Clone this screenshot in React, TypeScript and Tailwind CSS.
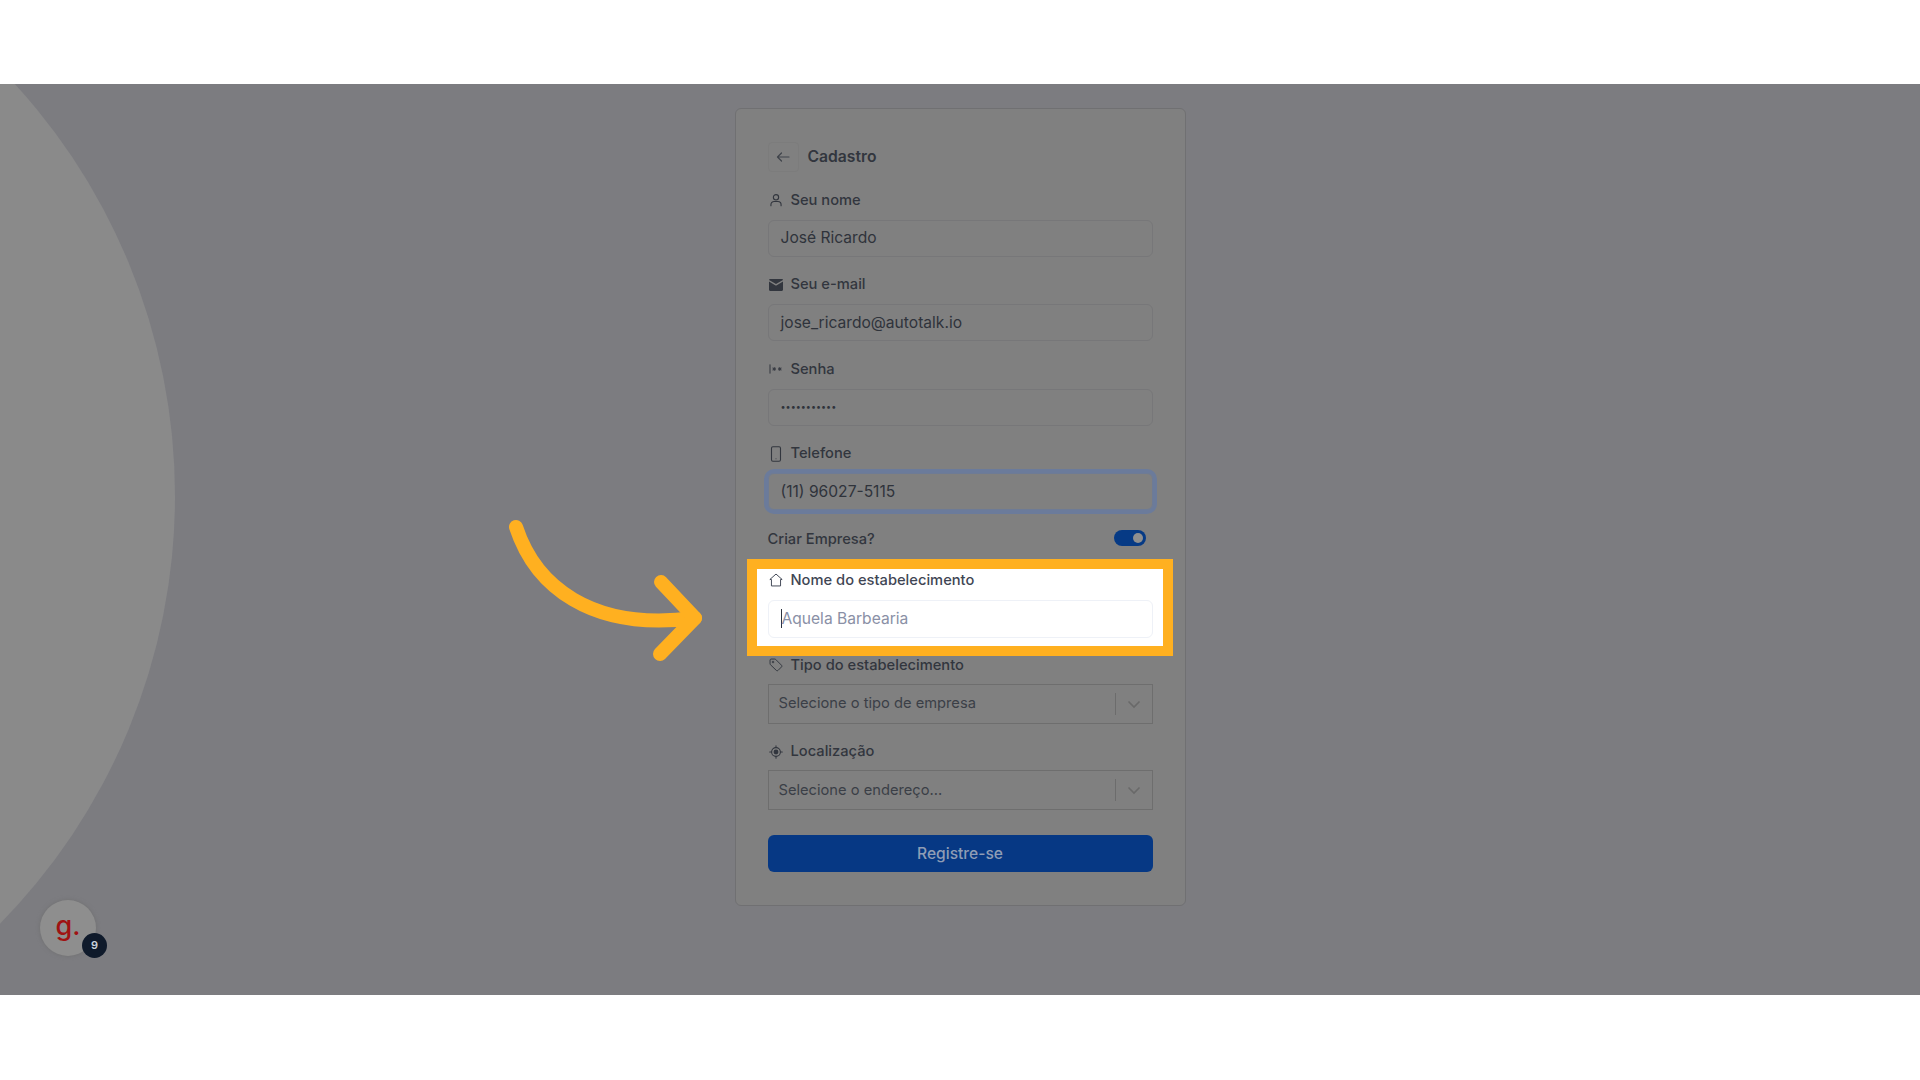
import { ReactNode } from "react";

const UserIcon = () => (
  <svg viewBox="0 0 16 16" className="w-[14px] h-[14px]" fill="none" stroke="currentColor" strokeWidth={1.3} strokeLinecap="round">
    <circle cx="8" cy="4.8" r="3" />
    <path d="M2.2 14.5v-1.2a3.6 3.6 0 0 1 3.6-3.6h4.4a3.6 3.6 0 0 1 3.6 3.6v1.2" />
  </svg>
);

const MailIcon = () => (
  <svg viewBox="0 0 14 12" className="w-[14px] h-[12px]" fill="currentColor">
    <path d="M1.2 0h11.6c.6 0 1.1.4 1.2 1L7 5 0 1c.1-.6.6-1 1.2-1z" />
    <path d="M0 2.6l6.6 3.8c.3.1.5.1.8 0L14 2.6v8.2c0 .7-.5 1.2-1.2 1.2H1.2C.5 12 0 11.5 0 10.8z" />
  </svg>
);

const PasswordIcon = () => (
  <svg viewBox="0 0 14 10" className="w-[14px] h-[10px]" fill="none" stroke="currentColor" strokeLinecap="round">
    <path d="M1 .8v8.4" strokeWidth={1} />
    <path d="M5.2 3.4v3.2M3.8 4.2l2.8 1.6M6.6 4.2L3.8 5.8M10.8 3.4v3.2M9.4 4.2l2.8 1.6M12.2 4.2L9.4 5.8" strokeWidth={0.9} />
  </svg>
);

const PhoneIcon = () => (
  <svg viewBox="0 0 12 16" className="w-[12px] h-[16px]" fill="none" stroke="currentColor" strokeWidth={1.1}>
    <rect x="1.5" y="0.8" width="9" height="14.4" rx="1.4" />
    <circle cx="6" cy="12.8" r="0.5" fill="currentColor" stroke="none" />
  </svg>
);

const HomeIcon = () => (
  <svg viewBox="0 0 16 16" className="w-[14px] h-[14px]" fill="none" stroke="currentColor" strokeWidth={1.1} strokeLinejoin="round">
    <path d="M1 7.4L8 1.2l7 6.2h-1.8v7.4H2.8V7.4z" />
  </svg>
);

const TagIcon = () => (
  <svg viewBox="0 0 16 16" className="w-[14px] h-[14px]" fill="none" stroke="currentColor" strokeWidth={1.1} strokeLinejoin="round">
    <path d="M1.2 2.4c0-.7.5-1.2 1.2-1.2h4.2c.4 0 .7.1 1 .4l6.8 6.8c.5.5.5 1.2 0 1.7l-4.2 4.2c-.5.5-1.2.5-1.7 0L1.6 7.6c-.3-.3-.4-.6-.4-1z" />
    <circle cx="4.6" cy="4.6" r="0.9" />
  </svg>
);

const LocationIcon = () => (
  <svg viewBox="0 0 16 16" className="w-[14px] h-[14px]" fill="none" stroke="currentColor" strokeLinecap="round">
    <circle cx="8" cy="8" r="5" strokeWidth={1.2} />
    <circle cx="8" cy="8" r="2.8" fill="currentColor" stroke="none" />
    <path d="M8 .8v2M8 13.2v2M.8 8h2M13.2 8h2" strokeWidth={1.2} />
  </svg>
);

function Label({ icon, text, light }: { icon: ReactNode; text: string; light?: boolean }) {
  return (
    <div className={`flex items-center h-5 text-[14.7px] font-[450] ${light ? "text-[#3f4654]" : "text-[#32363e]"}`}>
      <span className="w-[14px] flex justify-center mr-2 ml-[1px]">{icon}</span>
      <span>{text}</span>
    </div>
  );
}

function TextField({ icon, label, value, secret }: { icon: ReactNode; label: string; value: string; secret?: boolean }) {
  return (
    <div className="mb-[18px]">
      <Label icon={icon} text={label} />
      <div
        className={`mt-[9.5px] h-[37px] flex items-center px-3 rounded-md border border-[#777779] text-[#2f333b] ${
          secret ? "text-[9px]" : "text-[15.6px]"
        }`}
      >
        {value}
      </div>
    </div>
  );
}

function SelectField({ icon, label, value, last }: { icon: ReactNode; label: string; value: string; last?: boolean }) {
  return (
    <div className={last ? "mb-[25px]" : "mb-[18px]"}>
      <Label icon={icon} text={label} />
      <div className="mt-[8.5px] h-10 flex items-center border border-[#6e6e6e] pl-[10px] text-[14.7px] text-[#3b3f47]">
        <span className="flex-1">{value}</span>
        <span className="w-px h-[22px] bg-[#6c6c6c]" />
        <span className="w-9 flex justify-center">
          <svg viewBox="0 0 20 20" className="w-5 h-5 text-[#696969]" fill="none" stroke="currentColor" strokeWidth={1.6}>
            <path d="M4.5 7.5L10 13l5.5-5.5" />
          </svg>
        </span>
      </div>
    </div>
  );
}

export default function App() {
  return (
    <div className="min-h-screen bg-white font-['Inter',sans-serif]">
      <div className="h-[84px] bg-white" />
      <main className="relative h-[911px] bg-[#7c7c80] overflow-hidden flex justify-center pt-[24px]">
        {/* decorative circle */}
        <div className="absolute left-[-1045px] top-[-198px] w-[1220px] h-[1220px] rounded-full bg-[#8a8a8a]" />

        <section className="relative w-[451px] h-[798px] bg-[#808080] border border-[#707072] rounded-md px-8 pt-[33px]">
          <div className="flex items-center h-[30px] mb-[18px]">
            <button className="w-[31px] h-[30px] flex items-center justify-center rounded border border-[#7c7c7c] text-[#3f434a]">
              <svg viewBox="0 0 16 16" className="w-4 h-4" fill="none" stroke="currentColor" strokeWidth={1.2} strokeLinecap="round" strokeLinejoin="round">
                <path d="M14 8H2.5M6.5 4L2.5 8l4 4" />
              </svg>
            </button>
            <h1 className="ml-[9px] text-[15.7px] font-semibold text-[#32363e]">Cadastro</h1>
          </div>

          <TextField icon={<UserIcon />} label="Seu nome" value="José Ricardo" />
          <TextField icon={<MailIcon />} label="Seu e-mail" value="jose_ricardo@autotalk.io" />
          <TextField icon={<PasswordIcon />} label="Senha" value="•••••••••••" secret />

          <div className="mb-4">
            <Label icon={<PhoneIcon />} text="Telefone" />
            <div className="mt-[9.5px] h-[37px] flex items-center px-3 rounded-md border border-[#6e7b95] outline-4 outline-[#6b7b9b] text-[15.6px] text-[#2f333b]">
              (11) 96027-5115
            </div>
          </div>

          <div className="flex items-center justify-between h-6 pr-[7px] mb-5">
            <span className="pt-[3px] text-[14.7px] font-[450] text-[#32363e]">Criar Empresa?</span>
            <span className="w-8 h-4 rounded-full bg-[#063a85] flex items-center justify-end pr-[3px]">
              <span className="w-[10px] h-[10px] rounded-full bg-[#8f8f8f]" />
            </span>
          </div>

          {/* highlighted field */}
          <div className="relative mb-[17.5px]">
            <div className="absolute left-[-21px] right-[-20px] top-[-11px] bottom-[-18.5px] bg-white border-[10px] border-[#ffb020]" />
            <div className="relative">
              <Label icon={<HomeIcon />} text="Nome do estabelecimento" light />
              <div className="mt-[9.5px] h-[38px] flex items-center px-3 rounded-md border border-[#eef1f7] bg-white text-[15.6px] text-[#8a90a6]">
                <span className="w-px h-[19px] bg-[#2c3340]" />
                <span>Aquela Barbearia</span>
              </div>
            </div>
          </div>

          <SelectField icon={<TagIcon />} label="Tipo do estabelecimento" value="Selecione o tipo de empresa" />
          <SelectField icon={<LocationIcon />} label="Localização" value="Selecione o endereço..." last />

          <button className="w-full h-[37px] rounded-md bg-[#063884] text-[15.6px] font-medium text-[#8f9db5]">
            Registre-se
          </button>
        </section>

        {/* arrow callout */}
        <svg className="absolute left-[500px] top-[425px] w-[210px] h-[160px]" viewBox="500 509 210 160" fill="none" stroke="#ffb020" strokeWidth={14} strokeLinecap="round" strokeLinejoin="round">
          <path d="M516 527C535 585 590 632 695 618" />
          <path d="M661 582L695 618L660 654" />
        </svg>

        {/* chat avatar */}
        <div className="absolute left-[40px] top-[816px] w-14 h-14 rounded-full bg-[#8e8e8e] flex items-center justify-center shadow-[0_0_4px_#707070]">
          <span className="text-[27px] leading-none font-medium text-[#a01212] mt-[-6px]">g.</span>
          <span className="absolute left-[42px] top-[33px] w-[25px] h-[25px] rounded-full bg-[#0f1a2b] flex items-center justify-center text-[11px] font-semibold text-[#c9d2dc]">9</span>
        </div>
      </main>
      <div className="h-[85px] bg-white" />
    </div>
  );
}
